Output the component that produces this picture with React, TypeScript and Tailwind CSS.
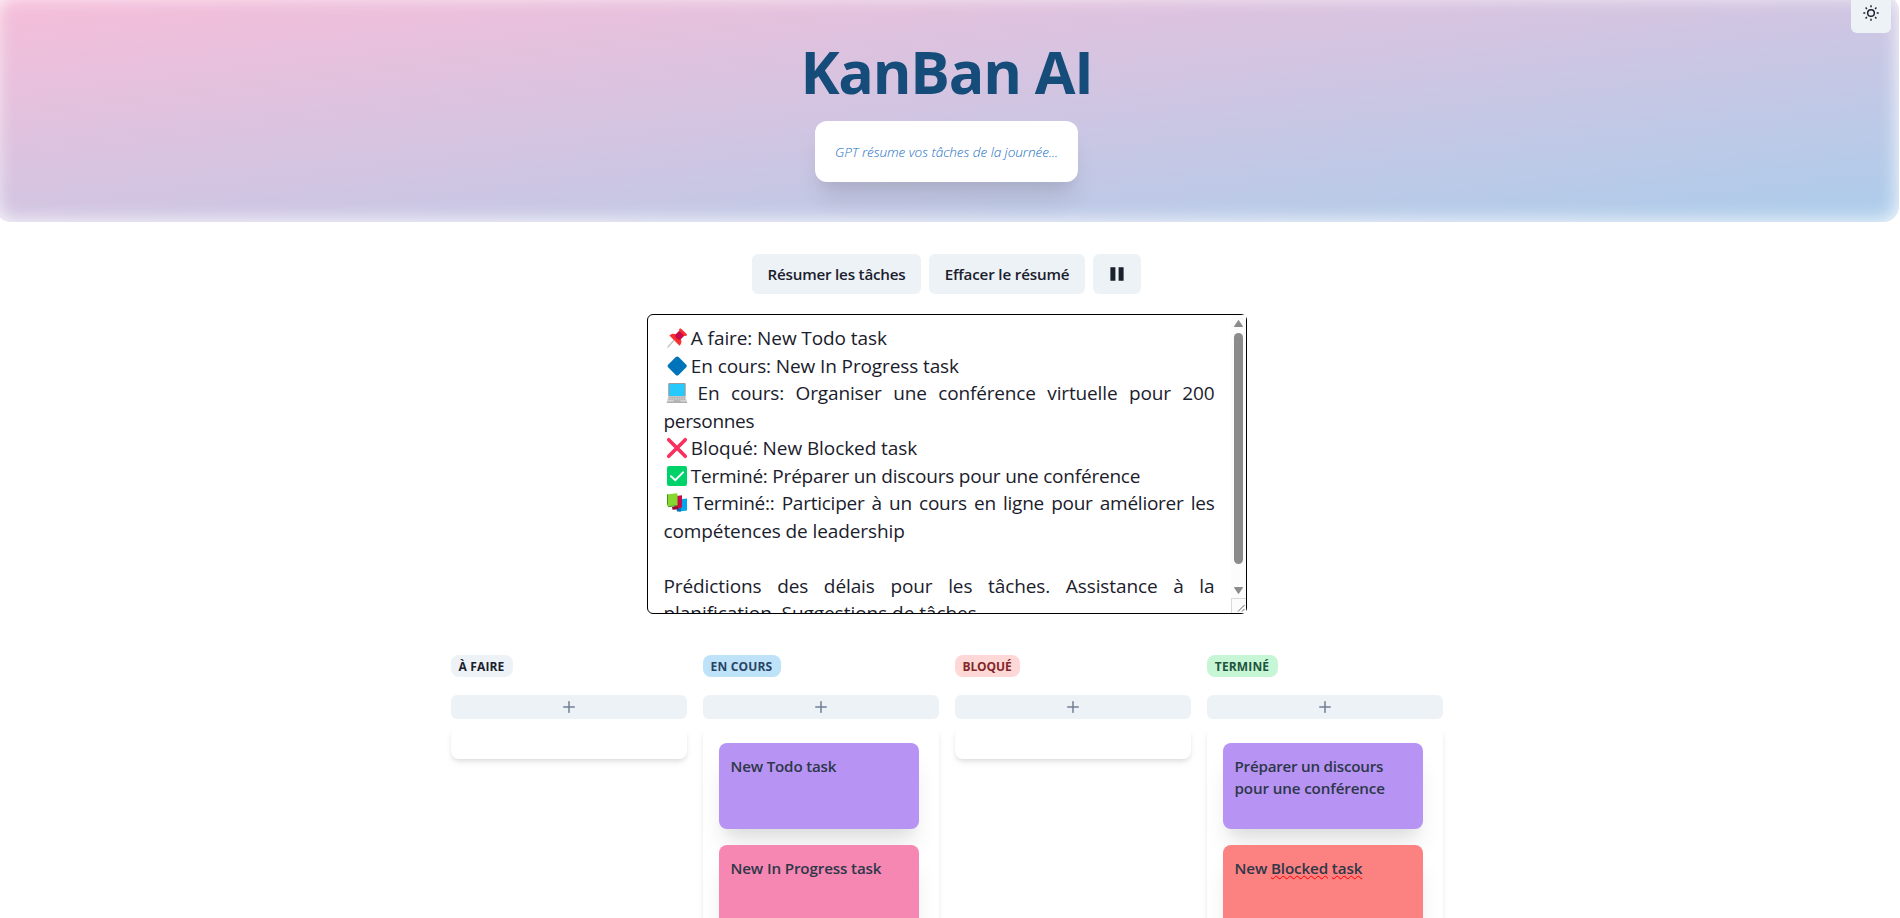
import React from "react";
import type { ReactNode } from "react";

function Emoji({ children }: { children: ReactNode }) {
  return (
    <svg viewBox="0 0 24 20" width="24" height="20" className="-mr-[1.5px] inline-block overflow-visible align-[-3px]" aria-hidden="true">
      {children}
    </svg>
  );
}

const Pin = () => (
  <Emoji>
    <path d="M9.5 12.8 4 19" stroke="#c4c4c8" strokeWidth="1.5" strokeLinecap="round" />
    <path d="M5.4 7.6c2-2 5-2.3 6.800-.8l3.200-3.400-.3-1.700c.2-1.200 1.300-1.700 2.300-.8l5 4.800c1 1 .4 2.200-.8 2.300l-1.700-.2-3.200 3.200c1.300 2 .8 4.800-1.200 6.800z" fill="#f8312f" />
    <path d="m11.200 6.800 4-4 5 5-4 4c-2.500.7-5.600-2.500-5-5z" fill="#ca0b4a" />
  </Emoji>
);
const Diamond = () => (
  <Emoji>
    <path d="M13.200.5q.8 0 1.400.6l7.700 7.700q1.200 1.200 0 2.400l-7.700 7.700q-1.400 1.200-2.800 0L4.100 11.200q-1.200-1.200 0-2.400l7.700-7.700q.6-.6 1.400-.6z" fill="#0074ba" />
  </Emoji>
);
const Laptop = () => (
  <Emoji>
    <rect x="4.200" y="0" width="17.500" height="13.800" rx="1" fill="#9b9b9b" />
    <rect x="5.300" y="1" width="15.300" height="12" fill="#26c9fc" />
    <path d="M4.300 13.500h17.300l1.500 5.500H2.800z" fill="#d3d3d3" />
    <path d="M4.800 14.700h16.300M4.500 16.200h16.900" stroke="#9b9b9b" strokeWidth=".8" strokeDasharray="1.200 .5" />
    <path d="M9.500 18h7M2.800 19.300h20.300" stroke="#9b9b9b" strokeWidth="1" />
  </Emoji>
);
const Cross = () => (
  <Emoji>
    <path d="m4.700 1.700 16.600 16.600M21.300 1.700 4.700 18.300" stroke="#f92f60" strokeWidth="3.600" strokeLinecap="round" />
  </Emoji>
);
const Check = () => (
  <Emoji>
    <rect x="3" y="0" width="20" height="20" rx="2" fill="#00d26a" />
    <path d="m7 10.200 4.300 4L19 6.400" fill="none" stroke="#fff" strokeWidth="2" strokeLinecap="round" />
  </Emoji>
);
const Books = () => (
  <Emoji>
    <path d="m14 6.500 9-1V17.500l-8 1z" fill="#00a6ed" />
    <path d="M12.500 15.500 17 15v3.500h-4z" fill="#0074ba" />
    <path d="m10 3.300 8-1v12.200l-8 1.300z" fill="#ca0b4a" />
    <path d="M8 13.800h6.500v2.400l-6 .5z" fill="#990838" />
    <path d="M3 1.500 12.500.2q1 0 1 1V12.500L5 13.800 3 12.800z" fill="#86d72f" />
    <path d="M3 12q.3-.8 1-.8V1.300L3 1.500z" fill="#44911b" />
    <path d="M4 13.700l9.300-1.100" stroke="#44911b" strokeWidth=".9" />
  </Emoji>
);

function SunIcon() {
  return (
    <svg viewBox="0 0 24 24" className="size-4" fill="none" stroke="currentColor" strokeWidth="2" strokeLinejoin="round">
      <circle cx="12" cy="12" r="5" strokeWidth="2.200" />
      <path d="M12 .5v3M12 20.500v3M3.900 3.900l2 2M18.100 18.100l2 2M.5 12h3M20.500 12h3M3.900 20.100l2-2M18.100 5.900l2-2" strokeWidth="2.200" />
    </svg>
  );
}

interface Task {
  color: string;
  text: ReactNode;
}
interface Column {
  title: string;
  badge: string;
  tasks: Task[];
}

const squiggle =
  "underline decoration-wavy decoration-[#ff0000] decoration-[0.8px] underline-offset-[1px] [text-decoration-skip-ink:none]";

const columns: Column[] = [
  { title: "À faire", badge: "w-[62px] bg-[#edf2f7] text-[#1a202c] tracking-[0.14px]", tasks: [] },
  {
    title: "En cours",
    badge: "w-[78px] bg-[#bee3f8] text-[#2a4365] tracking-[0.17px]",
    tasks: [
      { color: "bg-[#b794f4]", text: <span className="tracking-[-0.2px]">New Todo task</span> },
      { color: "bg-[#f687b3]", text: <span className="tracking-[-0.14px]">New In Progress task</span> },
    ],
  },
  { title: "Bloqué", badge: "w-[65px] bg-[#fed7d7] text-[#822727] tracking-[-0.1px]", tasks: [] },
  {
    title: "Terminé",
    badge: "w-[71px] bg-[#c6f6d5] text-[#22543d] tracking-[0.14px]",
    tasks: [
      {
        color: "bg-[#b794f4]",
        text: (
          <>
            <span className="tracking-[-0.24px]">Préparer un discours</span>
            <br />
            <span className="tracking-[-0.13px]">pour une conférence</span>
          </>
        ),
      },
      {
        color: "bg-[#fc8181]",
        text: (
          <span className="tracking-[-0.13px]">
            New <span className={squiggle}>Blocked</span> <span className={squiggle}>task</span>
          </span>
        ),
      },
    ],
  },
];

function Board() {
  return (
    <div className="mt-[41px] flex gap-4">
      {columns.map((c) => (
        <section key={c.title} className="flex w-[236px] flex-col">
          <h2 className={`flex h-[22px] items-center justify-center rounded-lg pt-px pr-px text-xs font-bold whitespace-nowrap uppercase ${c.badge}`}>
            {c.title}
          </h2>
          <button className="mt-[18px] flex h-6 items-center justify-center rounded-md bg-[#edf2f7] text-[#718096]">
            <svg viewBox="0 0 12 12" className="size-3" fill="none" stroke="currentColor" strokeWidth="1.500" strokeLinecap="round">
              <path d="M6 .7v10.600M.7 6h10.600" />
            </svg>
          </button>
          <div className="mt-2 flex flex-col gap-4 rounded-lg p-4 shadow-[0_4px_6px_-1px_rgba(0,0,0,0.1),0_2px_4px_-1px_rgba(0,0,0,0.06)]">
            {c.tasks.map((t, i) => (
              <div
                key={i}
                className={`h-[86px] w-[200px] shrink-0 rounded-lg py-3 pr-3 pl-[11.5px] text-[15.2px] leading-[22px] font-semibold whitespace-nowrap text-[#2d3748] shadow-[0_20px_25px_-5px_rgba(0,0,0,0.1),0_10px_10px_-5px_rgba(0,0,0,0.04)] ${t.color}`}
              >
                {t.text}
              </div>
            ))}
            {c.tasks.length > 0 && <div className="h-24" />}
          </div>
        </section>
      ))}
    </div>
  );
}

function Summary() {
  return (
    <div className="mt-5 flex h-[300px] w-[600px] rounded-md border border-black bg-white text-[19px] leading-[27.5px] text-[#1a202c]">
      <div className="flex-1 overflow-hidden pt-[10px] pr-[16.5px] pl-[15.5px] whitespace-nowrap">
        <p className="tracking-[-0.09px]"><Pin /> A faire: New Todo task</p>
        <p className="tracking-[-0.11px]"><Diamond /> En cours: New In Progress task</p>
        <p className="text-justify tracking-[-0.15px] whitespace-normal [text-align-last:justify]">
          <Laptop /> En cours: Organiser une conférence virtuelle pour 200
        </p>
        <p className="tracking-[-0.33px]">personnes</p>
        <p className="tracking-[-0.08px]"><Cross /> Bloqué: New Blocked task</p>
        <p className="tracking-[-0.21px]"><Check /> Terminé: Préparer un discours pour une conférence</p>
        <p className="text-justify tracking-[-0.25px] whitespace-normal [text-align-last:justify]">
          <Books /> Terminé:: Participer à un cours en ligne pour améliorer les
        </p>
        <p className="tracking-[-0.1px]">compétences de leadership</p>
        <p>&nbsp;</p>
        <p className="text-justify tracking-[-0.1px] whitespace-normal [text-align-last:justify]">
          Prédictions des délais pour les tâches. Assistance à la
        </p>
        <p className="tracking-[-0.05px]">planification. Suggestions de tâches.</p>
      </div>
      <div className="flex w-[15px] flex-col items-center bg-[#fcfcfc] pt-[5px]">
        <svg viewBox="0 0 9 7" className="h-[7px] w-[9px]" fill="#8b8b8b">
          <path d="M4 .4q.5-.6 1 0l3.900 5.800q.2.800-.6.800H.7q-.8 0-.6-.8z" />
        </svg>
        <div className="mt-[6px] h-[231px] w-[9px] rounded-full bg-[#8b8b8b]" />
        <svg viewBox="0 0 9 7" className="mt-[23px] h-[7px] w-[9px]" fill="#8b8b8b">
          <path d="M4 6.600q.5.600 1 0l3.900-5.800q.2-.8-.6-.8H.7q-.8 0-.6.800z" />
        </svg>
        <svg viewBox="0 0 15 15" className="mt-1 h-[15px] w-[15px]" fill="none">
          <path d="M.5 15V.5H15" stroke="#d9d9d9" />
          <path d="m7 13.500 6.500-6.500M11 13.500l2.500-2.500" stroke="#555" strokeWidth=".9" />
        </svg>
      </div>
    </div>
  );
}

export default function App() {
  const button = "flex h-10 items-center justify-center rounded-md bg-[#edf2f7] text-[15.2px] font-semibold whitespace-nowrap text-[#1a202c]";
  return (
    <div className="relative h-[918px] w-full overflow-hidden bg-white font-['Open_Sans','Noto_Sans',sans-serif]">
      <header className="-mt-[5px] -ml-[5px] flex h-[227px] w-[1904px] flex-col items-center rounded-2xl bg-[linear-gradient(to_bottom_right,#f7bdd9,#abcdeb)] pt-[46px] pr-px shadow-[inset_0_0_20px_#ffffff]">
        <h1 className="text-[59px] leading-[60px] font-bold tracking-[-1.22px] text-[#154c79]">KanBan AI</h1>
        <div className="mt-5 flex h-[61px] w-[263px] items-center justify-center rounded-xl bg-white pt-px text-[13.6px] font-light tracking-[-0.05px] whitespace-nowrap text-[#1a6fc4] italic shadow-[0_20px_25px_-5px_rgba(0,0,0,0.1),0_10px_10px_-5px_rgba(0,0,0,0.04)]">
          GPT résume vos tâches de la journée...
        </div>
      </header>
      <button aria-label="Theme" className="absolute -top-[7px] left-[1851px] flex size-10 items-center justify-center rounded-md bg-[#edf2f7] text-[#1a202c]">
        <SunIcon />
      </button>
      <main className="flex w-[1894px] flex-col items-center pt-8">
        <div className="flex gap-2 pr-px">
          <button className={`${button} w-[169px] tracking-[-0.2px]`}>Résumer les tâches</button>
          <button className={`${button} w-[156px] tracking-[-0.17px]`}>Effacer le résumé</button>
          <button aria-label="Pause" className={`${button} w-12`}>
            <svg viewBox="0 0 16 16" className="size-4" fill="currentColor">
              <path d="M1.400 1.200h5v13.600h-5zM9.600 1.200h5v13.600h-5z" />
            </svg>
          </button>
        </div>
        <Summary />
        <Board />
      </main>
    </div>
  );
}
